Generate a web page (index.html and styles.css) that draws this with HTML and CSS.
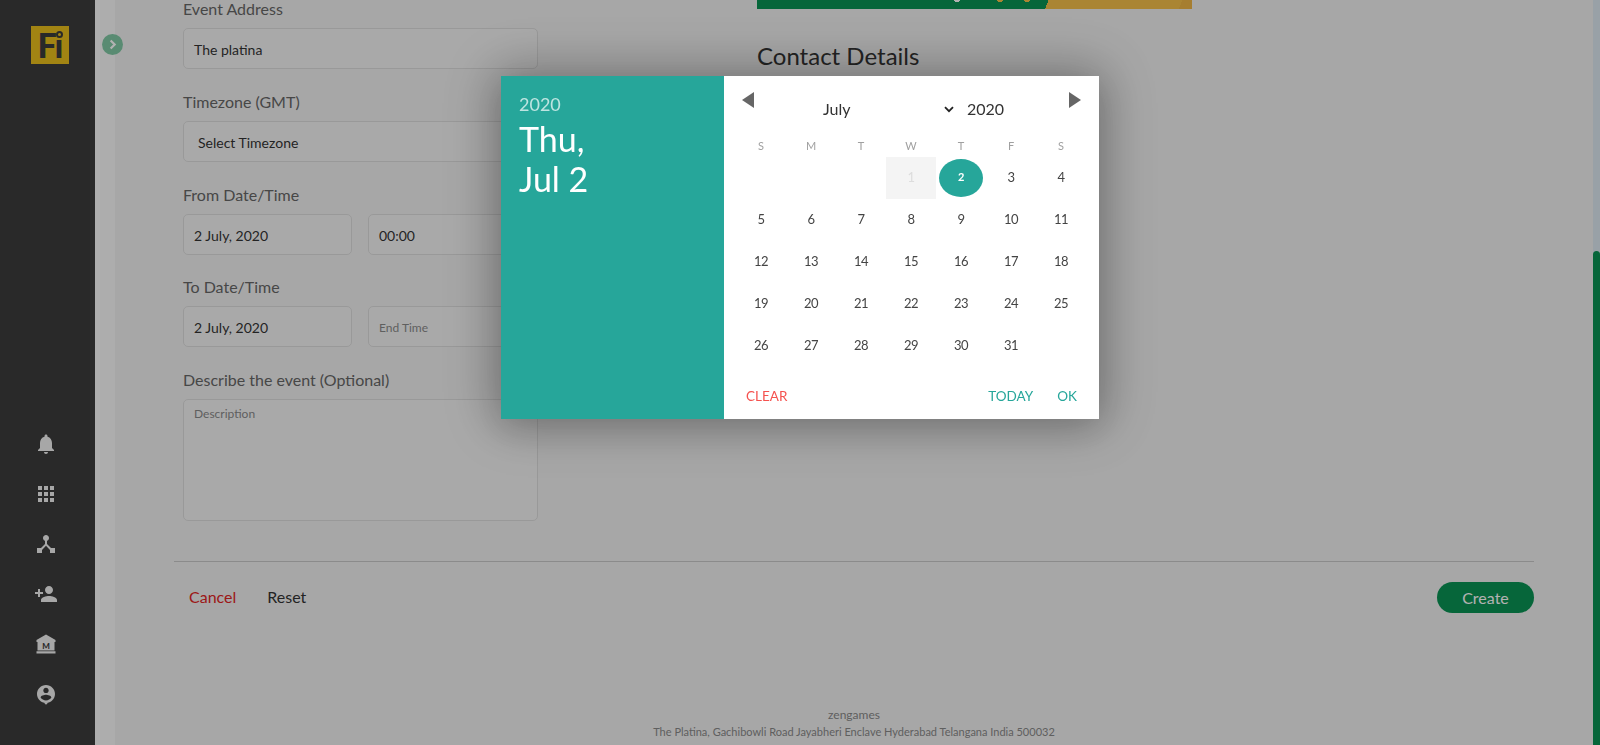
FILE: index.html
```html
<!DOCTYPE html>
<html lang="en">
<head>
<meta charset="utf-8">
<title>Create Event</title>
<link rel="stylesheet" href="styles.css">
</head>
<body>
<div class="app">
  <aside class="sidebar">
    <div class="logo"><span class="logo-text">Fı</span><span class="logo-dot"></span></div>
    <nav class="side-icons">
      <svg class="icon" viewBox="0 0 24 24"><path d="M12 22c1.1 0 2-.9 2-2h-4c0 1.1.9 2 2 2zm6-6v-5c0-3.07-1.63-5.64-4.5-6.32V4c0-.83-.67-1.5-1.5-1.5s-1.5.67-1.5 1.5v.68C7.64 5.36 6 7.92 6 11v5l-2 2v1h16v-1l-2-2z"/></svg>
      <svg class="icon" viewBox="0 0 24 24"><path d="M4 8h4V4H4v4zm6 12h4v-4h-4v4zm-6 0h4v-4H4v4zm0-6h4v-4H4v4zm6 0h4v-4h-4v4zm6-10v4h4V4h-4zm-6 4h4V4h-4v4zm6 6h4v-4h-4v4zm0 6h4v-4h-4v4z"/></svg>
      <svg class="icon" viewBox="0 0 24 24"><path d="M17 16l-4-4V8.82C14.16 8.4 15 7.3 15 6c0-1.66-1.34-3-3-3S9 4.34 9 6c0 1.3.84 2.4 2 2.82V12l-4 4H3v5h5v-3.05l4-4.2 4 4.2V21h5v-5h-4z"/></svg>
      <svg class="icon" viewBox="0 0 24 24"><path d="M15 12c2.21 0 4-1.79 4-4s-1.79-4-4-4-4 1.79-4 4 1.79 4 4 4zm-9-2V7H4v3H1v2h3v3h2v-3h3v-2H6zm9 4c-2.67 0-8 1.34-8 4v2h16v-2c0-2.66-5.33-4-8-4z"/></svg>
      <svg class="icon" viewBox="0 0 24 24"><path d="M12 2.500 2.500 8v2h1v8.500h17V10h1V8zM2.500 19.200h19v2.300h-19z"/><text class="bank-m" x="12" y="17" text-anchor="middle">M</text></svg>
      <svg class="icon" viewBox="-1.330 -1.330 26.670 26.670"><path d="M12 2C6.480 2 2 6.480 2 12s4.480 10 10 10 10-4.480 10-10S17.520 2 12 2zm0 3c1.660 0 3 1.340 3 3s-1.340 3-3 3-3-1.340-3-3 1.340-3 3-3zm0 14.200c-2.500 0-4.710-1.280-6-3.220.030-1.990 4-3.080 6-3.080 1.990 0 5.970 1.090 6 3.080-1.290 1.940-3.500 3.220-6 3.220z"/><path d="M9.500 21.500h5L12 24z"/></svg>
    </nav>
  </aside>
  <div class="strip"></div>
  <span class="toggle"><svg viewBox="0 0 24 24" class="toggle-icon"><path d="M9 5.500l6.500 6.500L9 18.500"/></svg></span>
  <main class="content">
    <div class="columns">
      <form class="form-col">
        <div class="field">
          <label class="label">Event Address</label>
          <div class="input">The platina</div>
        </div>
        <div class="field">
          <label class="label">Timezone (GMT)</label>
          <div class="input select">Select Timezone</div>
        </div>
        <div class="field">
          <label class="label">From Date/Time</label>
          <div class="pair">
            <div class="input">2 July, 2020</div>
            <div class="input">00:00</div>
          </div>
        </div>
        <div class="field">
          <label class="label">To Date/Time</label>
          <div class="pair">
            <div class="input">2 July, 2020</div>
            <div class="input placeholder">End Time</div>
          </div>
        </div>
        <div class="field">
          <label class="label">Describe the event (Optional)</label>
          <div class="textarea placeholder">Description</div>
        </div>
      </form>
      <section class="side-col">
        <div class="banner"></div>
        <h2 class="side-title">Contact Details</h2>
      </section>
    </div>
    <div class="actions">
      <div class="links"><a class="cancel">Cancel</a><a class="reset">Reset</a></div>
      <button class="create" type="button">Create</button>
    </div>
    <footer class="foot">
      <div class="foot-name">zengames</div>
      <div class="foot-address">The Platina, Gachibowli Road Jayabheri Enclave Hyderabad Telangana India 500032</div>
    </footer>
  </main>
  <div class="scrollbar"><div class="thumb"></div></div>
</div>

<div class="overlay"></div>

<div class="picker">
  <div class="picker-date">
    <div class="picker-year">2020</div>
    <div class="picker-day">Thu,<br>Jul 2</div>
  </div>
  <div class="picker-cal">
    <div class="cal-nav">
      <span class="arrow arrow-prev"></span>
      <div class="cal-select">
        <div class="cal-month"><span>July</span><svg class="chev" viewBox="0 0 10 7"><path d="M1 1.200l4 4 4-4"/></svg></div>
        <span class="cal-yr">2020</span>
      </div>
      <span class="arrow arrow-next"></span>
    </div>
    <div class="cal-grid">
      <div class="dow">S</div><div class="dow">M</div><div class="dow">T</div><div class="dow">W</div><div class="dow">T</div><div class="dow">F</div><div class="dow">S</div>
      <div class="day"></div><div class="day"></div><div class="day"></div><div class="day disabled">1</div><div class="day"><span class="selected">2</span></div><div class="day">3</div><div class="day">4</div>
      <div class="day">5</div><div class="day">6</div><div class="day">7</div><div class="day">8</div><div class="day">9</div><div class="day">10</div><div class="day">11</div>
      <div class="day">12</div><div class="day">13</div><div class="day">14</div><div class="day">15</div><div class="day">16</div><div class="day">17</div><div class="day">18</div>
      <div class="day">19</div><div class="day">20</div><div class="day">21</div><div class="day">22</div><div class="day">23</div><div class="day">24</div><div class="day">25</div>
      <div class="day">26</div><div class="day">27</div><div class="day">28</div><div class="day">29</div><div class="day">30</div><div class="day">31</div><div class="day"></div>
    </div>
    <div class="cal-foot">
      <span class="btn-clear">CLEAR</span>
      <span class="btn-today">TODAY</span>
      <span class="btn-ok">OK</span>
    </div>
  </div>
</div>
</body>
</html>
```
FILE: styles.css
```css
* { box-sizing: border-box; }
html, body { margin: 0; height: 100%; overflow: hidden; }
body { font-family: Lato, "Open Sans", sans-serif; background: #f0f0f0; color: #333; }

.app { display: flex; height: 745px; position: relative; }

.sidebar { width: 95px; flex: none; background: #3c3c3c; display: flex; flex-direction: column; align-items: center; padding-top: 26px; }
.logo { width: 38px; height: 38px; margin-left: 5px; background: #e8be1c; position: relative; display: flex; justify-content: center; align-items: center; }
.logo-text { font: 900 34px/38px Lato, sans-serif; color: #3c3c3c; letter-spacing: -1px; }
.logo-dot { position: absolute; right: 6px; top: 5px; width: 7px; height: 7px; border: 2px solid #3c3c3c; border-radius: 50%; }
.side-icons { margin: auto 3px 0 0; display: flex; flex-direction: column; gap: 26px; padding-bottom: 39px; }
.icon { width: 24px; height: 24px; display: block; fill: #f0f0f0; }
.bank-m { font: 900 8px Lato, sans-serif; fill: #3c3c3c; }

.strip { width: 20px; flex: none; background: #f8f8f8; }
.toggle { position: absolute; left: 102px; top: 34px; width: 21px; height: 21px; border-radius: 50%; background: #80c8a4; display: flex; align-items: center; justify-content: center; }
.toggle-icon { width: 15px; height: 15px; fill: none; stroke: #fff; stroke-width: 3.500; }

.content { flex: 1; min-width: 0; padding: 0 59px; display: flex; flex-direction: column; }
.columns { display: flex; gap: 219px; padding-left: 9px; height: 562px; border-bottom: 1px solid #c8c8c8; }
.form-col { width: 355px; flex: none; margin-top: -1px; }
.field { margin-bottom: 22.750px; }
.label { display: block; font-size: 16px; line-height: 20px; color: #666; margin-bottom: 9px; }
.input { height: 41px; border: 1px solid #dcdcdc; border-radius: 5px; background: #f3f3f3; font-size: 14px; line-height: 41px; padding-left: 10px; color: #333; }
.select { padding-left: 14px; }
.pair { display: flex; gap: 16px; }
.pair .input { flex: 1; }
.pair .input:first-child { flex: none; width: 169px; }
.placeholder { color: #888; font-size: 12px; }
.textarea { height: 122px; border: 1px solid #dcdcdc; border-radius: 5px; background: #f3f3f3; padding: 6px 10px; line-height: 16px; }

.side-col { width: 435px; flex: none; }
.banner { height: 9px; background:
  radial-gradient(circle at 200px -1px, #fff 3px, transparent 3.500px),
  radial-gradient(circle at 243px -1px, #f4bf49 3px, transparent 3.500px),
  radial-gradient(circle at 270px -1px, #f4bf49 3px, transparent 3.500px),
  linear-gradient(112deg, #0a9253 0, #0a9253 66.500%, #f4bf49 66.500%, #f4bf49 97%, #eeb545 97%); }
.side-title { margin: 32px 0 0; font-size: 24px; line-height: 30px; font-weight: 400; color: #333; }

.actions { display: flex; justify-content: space-between; align-items: flex-start; padding-top: 20px; }
.links { display: flex; gap: 31px; padding: 5px 0 0 15px; font-size: 16px; line-height: 20px; }
.cancel { color: #e02424; }
.reset { color: #333; }
.create { width: 97px; height: 31px; border: 0; border-radius: 16px; background: #0a9253; color: #fff; font: 400 16px/31px Lato, sans-serif; padding: 0; }

.foot { margin-top: auto; text-align: center; color: #888; font-size: 12px; line-height: 17px; padding-bottom: 5px; }
.foot-address { font-size: 11px; }

.scrollbar { width: 7px; flex: none; background: #dce7f0; display: flex; flex-direction: column; justify-content: flex-end; }
.thumb { height: 494px; background: #0a9253; border-radius: 4px 4px 0 0; }

.overlay { position: fixed; inset: 0; background: rgba(0, 0, 0, .3); }

.picker { position: fixed; left: 501px; top: 76px; width: 598px; height: 343px; display: flex; background: #fff;
  box-shadow: 0 0 50px 8px rgba(0,0,0,.3), 0 8px 30px rgba(0,0,0,.1); }
.picker-date { width: 223px; flex: none; background: #26a69a; color: #fff; padding: 16px 18px; }
.picker-year { font-size: 18px; line-height: 24px; color: rgba(255,255,255,.7); }
.picker-day { font-size: 34px; line-height: 40px; margin-top: 3px; }
.picker-cal { flex: 1; padding: 0 13px 0 12px; display: flex; flex-direction: column; }
.cal-nav { height: 56px; display: flex; align-items: flex-start; }
.arrow { width: 0; height: 0; margin-top: 16px; border-top: 8px solid transparent; border-bottom: 8px solid transparent; }
.arrow-prev { border-right: 12px solid #666; margin-left: 6px; }
.arrow-next { border-left: 12px solid #666; margin-right: 5px; }
.cal-select { flex: 1; display: flex; padding: 23px 0 0 69px; font-size: 16px; line-height: 20px; color: #333; }
.cal-month { width: 144px; display: flex; align-items: center; justify-content: space-between; padding-right: 13px; }
.chev { width: 10px; height: 7px; fill: none; stroke: #222; stroke-width: 1.800; }
.cal-grid { display: grid; grid-template-columns: repeat(7, 50px); grid-template-rows: 25px repeat(5, 42px); }
.dow { font-size: 11px; line-height: 25px; padding-top: 1px; color: #a0a0a0; text-align: center; }
.day { display: flex; align-items: center; justify-content: center; padding-bottom: 3px; font-size: 13px; letter-spacing: -.5px; color: #444; }
.disabled { background: #f4f4f4; color: #ddd; }
.selected { width: 44px; height: 38px; margin-top: 3px; padding-bottom: 3px; border-radius: 50%; background: #26a69a; color: #fff; font-size: 11px; font-weight: 700; display: flex; align-items: center; justify-content: center; }
.cal-foot { display: flex; padding: 20px 9px 0 10px; font-size: 13.500px; line-height: 18px; }
.btn-clear { color: #f5524f; margin-right: auto; }
.btn-today { color: #26a69a; margin-right: 24px; }
.btn-ok { color: #26a69a; }
```
